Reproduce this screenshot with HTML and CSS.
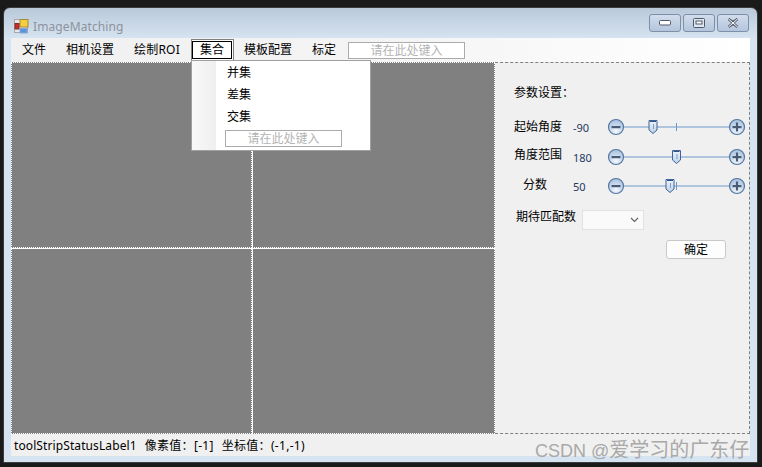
FILE: index.html
```html
<!DOCTYPE html>
<html lang="zh-CN">
<head>
    <meta charset="UTF-8">
    <title>ImageMatching</title>
    <link rel="stylesheet" href="styles.css">
</head>
<body>
    <svg class="defs" width="0" height="0">
        <defs>
            <radialGradient id="ball" cx="50%" cy="75%" r="70%">
                <stop offset="0" stop-color="#f4f8fd"/>
                <stop offset="0.55" stop-color="#c9daee"/>
                <stop offset="1" stop-color="#a9c2de"/>
            </radialGradient>
            <linearGradient id="thumb" x1="0" y1="0" x2="0" y2="1">
                <stop offset="0" stop-color="#eef4fb"/>
                <stop offset="1" stop-color="#bcd0e8"/>
            </linearGradient>
            <g id="minus">
                <circle cx="9" cy="9" r="7.5" fill="url(#ball)" stroke="#54769f" stroke-width="1.2"/>
                <rect x="4.5" y="8" width="9" height="2.2" fill="#4a5c74"/>
            </g>
            <g id="plus">
                <circle cx="9" cy="9" r="7.5" fill="url(#ball)" stroke="#54769f" stroke-width="1.2"/>
                <rect x="4.5" y="8" width="9" height="2.2" fill="#4a5c74"/>
                <rect x="7.9" y="4.5" width="2.2" height="9" fill="#4a5c74"/>
            </g>
            <g id="grip">
                <path d="M-4 -6.5H4V3L0 6.5L-4 3Z" fill="url(#thumb)" stroke="#3f6496" stroke-width="1"/>
                <path d="M-3 -5.5H3" stroke="#2f5488" stroke-width="1"/>
                <path d="M0.5 -3V2" stroke="#7f9cc0" stroke-width="1"/>
            </g>
        </defs>
    </svg>

    <div class="window">
        <div class="titlebar">
            <svg class="app-icon" width="15" height="15" viewBox="0 0 15 15">
                <rect x="0.5" y="0.5" width="13" height="13" fill="#e4e8ee" stroke="#a8a8a8"/>
                <rect x="6" y="0.5" width="8" height="7.5" fill="#f5cf3e" stroke="#a8893a"/>
                <rect x="1" y="4.5" width="4" height="5.5" fill="#cf2a1e" stroke="#7d3028"/>
                <rect x="6" y="9.5" width="7" height="4.5" fill="#5b93de" stroke="#8aa8cf"/>
            </svg>
            <span class="app-title">ImageMatching</span>
            <div class="win-buttons">
                <div class="win-btn">
                    <svg width="12" height="6" viewBox="0 0 12 6"><rect x="0.5" y="0.5" width="11" height="4.5" rx="1" fill="#fff" stroke="#4f5868"/></svg>
                </div>
                <div class="win-btn">
                    <svg width="12" height="10" viewBox="0 0 12 10"><rect x="0.5" y="0.5" width="11" height="9" rx="1" fill="#dfe7f0" stroke="#4f5868"/><rect x="3" y="3" width="6" height="3" fill="#fff" stroke="#4f5868" stroke-width="1"/></svg>
                </div>
                <div class="win-btn">
                    <svg width="12" height="10" viewBox="0 0 12 10"><path d="M1.5 1L6 4L10.5 1M1.5 9L6 6L10.5 9M1.5 1L10.5 9M10.5 1L1.5 9" fill="none" stroke="#5a6270" stroke-width="2.4"/><path d="M1.5 1L10.5 9M10.5 1L1.5 9" fill="none" stroke="#fff" stroke-width="1"/></svg>
                </div>
            </div>
        </div>

        <div class="client">
            <div class="menubar">
                <span class="menu-item">文件</span>
                <span class="menu-item">相机设置</span>
                <span class="menu-item menu-roi">绘制ROI</span>
                <div class="menu-open">
                    <span class="menu-open-label">集合</span>
                    <div class="dropdown">
                        <div class="drop-item">并集</div>
                        <div class="drop-item">差集</div>
                        <div class="drop-item">交集</div>
                        <div class="type-box drop-box">请在此处键入</div>
                    </div>
                </div>
                <span class="menu-item">模板配置</span>
                <span class="menu-item">标定</span>
                <div class="type-box menu-box">请在此处键入</div>
            </div>

            <div class="main">
                <div class="image-grid">
                    <div class="cell"></div>
                    <div class="cell cell-right"></div>
                    <div class="cell cell-lower"></div>
                    <div class="cell cell-right cell-lower"></div>
                </div>
                <div class="params">
                    <div class="params-title">参数设置：</div>
                    <div class="param-row">
                        <span class="param-label">起始角度</span>
                        <span class="param-value">-90</span>
                        <svg class="slider" width="139" height="18" viewBox="0 0 139 18">
                            <path d="M16 9H124" stroke="#6f97c9" stroke-width="1.2"/>
                            <path d="M69.5 5V13" stroke="#6f97c9"/>
                            <use href="#minus"/><use href="#plus" x="121"/>
                            <use href="#grip" x="46" y="9"/>
                        </svg>
                    </div>
                    <div class="param-row">
                        <span class="param-label label-up">角度范围</span>
                        <span class="param-value">180</span>
                        <svg class="slider" width="139" height="18" viewBox="0 0 139 18">
                            <path d="M16 9H124" stroke="#6f97c9" stroke-width="1.2"/>
                            <use href="#minus"/><use href="#plus" x="121"/>
                            <use href="#grip" x="69.5" y="9"/>
                        </svg>
                    </div>
                    <div class="param-row row-three">
                        <span class="param-label label-short">分数</span>
                        <span class="param-value">50</span>
                        <svg class="slider" width="139" height="18" viewBox="0 0 139 18">
                            <path d="M16 9H124" stroke="#6f97c9" stroke-width="1.2"/>
                            <path d="M69.5 5V13" stroke="#6f97c9"/>
                            <use href="#minus"/><use href="#plus" x="121"/>
                            <use href="#grip" x="63" y="9"/>
                        </svg>
                    </div>
                    <div class="match-row">
                        <span class="match-label">期待匹配数</span>
                        <div class="combo">
                            <svg width="9" height="6" viewBox="0 0 9 6"><path d="M1 1L4.5 4.5L8 1" fill="none" stroke="#606060" stroke-width="1.1"/></svg>
                        </div>
                    </div>
                    <div class="button-row">
                        <div class="ok-button">确定</div>
                    </div>
                </div>
            </div>

            <div class="statusbar">
                <span class="status-name">toolStripStatusLabel1</span>
                <span>像素值：[-1]</span>
                <span>坐标值：(-1,-1)</span>
            </div>
        </div>
    </div>

    <div class="watermark">CSDN @<span class="watermark-cn">爱学习的广东仔</span></div>
</body>
</html>
```

FILE: styles.css
```css
* {
    box-sizing: border-box;
}

html, body {
    height: 100%;
}

body {
    margin: 0;
    padding: 7px 4px 4px 3px;
    background-color: #1a1a1a;
    font-family: "Noto Sans", "Noto Sans CJK SC", sans-serif;
    font-size: 12px;
    color: #000;
    overflow: hidden;
}

.defs {
    position: absolute;
}

.window {
    height: 456px;
    padding: 0 7px 7px 7px;
    border: 1px solid #3c3c3c;
    border-radius: 7px 7px 0 0;
    background: linear-gradient(#b9c9d9, #d6e3f1 30px);
    display: flex;
    flex-direction: column;
}

.titlebar {
    height: 30px;
    flex: none;
    display: flex;
    align-items: center;
    padding: 7px 1px 0 3px;
}

.app-icon {
    margin-right: 4px;
}

.app-title {
    color: #8c939b;
    font-size: 12px;
    letter-spacing: 0.1px;
    line-height: 16px;
}

.win-buttons {
    margin-left: auto;
    margin-top: -7px;
    display: flex;
    gap: 2px;
}

.win-btn {
    width: 32px;
    height: 18px;
    border: 1px solid #7e8fa9;
    border-radius: 3px;
    background: linear-gradient(#d2dded, #b4c5dc);
    display: flex;
    align-items: center;
    justify-content: center;
}

.client {
    flex: 1;
    display: flex;
    flex-direction: column;
    min-height: 0;
}

.menubar {
    height: 24px;
    flex: none;
    display: flex;
    align-items: center;
    padding: 0 0 0 11px;
    background: linear-gradient(to right, #f0f0f0, #f4f4f4 50%, #ffffff);
}

.menu-item {
    line-height: 16px;
    margin-right: 20px;
}

.menu-roi {
    letter-spacing: 0.2px;
    margin-right: 19px;
}

.menu-open {
    position: relative;
    width: 43px;
    height: 22px;
    margin: 1px 10px 0 -8px;
    align-self: flex-start;
    border: 1px solid #808080;
    border-bottom: none;
    background: #fff;
    padding: 1px 1px 0 0;
}

.menu-open-label {
    display: block;
    height: 18px;
    border: 1px solid #000;
    text-align: center;
    line-height: 16px;
}

.dropdown {
    position: absolute;
    left: -1px;
    top: 20px;
    width: 180px;
    height: 91px;
    padding-top: 1px;
    background: #fff linear-gradient(to right, #f8f8f8, #efefef 24px, #fff 24px);
    border: 1px solid #a0a0a0;
    z-index: 5;
}

.drop-item {
    height: 22px;
    line-height: 22px;
    padding-left: 35px;
}

.type-box {
    height: 17px;
    border: 1px solid #ababab;
    background: #fff;
    color: #b4b4b4;
    text-align: center;
    line-height: 15px;
    width: 117px;
}

.menu-box {
    margin-left: -8px;
}

.drop-box {
    margin: 2px 0 0 33px;
}

.main {
    height: 372px;
    flex: none;
    display: flex;
}

.image-grid {
    width: 484px;
    flex: none;
    display: grid;
    grid-template-columns: 241px 243px;
    grid-template-rows: 186px 186px;
}

.cell {
    background-color: #808080;
    border: 1px dotted #fff;
}

.cell-right {
    border-left-style: solid;
}

.cell-lower {
    border-top-style: solid;
}

.params {
    flex: 1;
    background-color: #f0f0f0;
    border: 1px dashed #808080;
    border-left: none;
    padding: 22px 0 0 19px;
}

.params-title {
    height: 16px;
    line-height: 16px;
    margin-bottom: 11px;
}

.param-row {
    display: flex;
    align-items: center;
    height: 30px;
}

.row-three {
    height: 28px;
}

.param-label {
    width: 48px;
    margin-right: 11px;
    flex: none;
    line-height: 16px;
}

.label-up {
    padding-bottom: 5px;
}

.label-short {
    padding: 0 0 3px 9px;
}

.param-value {
    width: 34px;
    flex: none;
    font-size: 11px;
    color: #1f3a5f;
}

.slider {
    flex: none;
}

.match-row {
    display: flex;
    align-items: center;
    margin: 9px 0 0 2px;
}

.match-label {
    width: 66px;
    flex: none;
    line-height: 16px;
    padding-bottom: 5px;
}

.combo {
    width: 62px;
    height: 20px;
    background: #fafafa;
    border: 1px solid #e2e2e2;
    display: flex;
    align-items: center;
    justify-content: flex-end;
    padding-right: 4px;
}

.button-row {
    display: flex;
    margin: 10px 0 0 152px;
}

.ok-button {
    width: 60px;
    height: 19px;
    background: #fdfdfd;
    border: 1px solid #c8c8c8;
    border-radius: 3px;
    text-align: center;
    line-height: 17px;
}

.statusbar {
    height: 22px;
    flex: none;
    background-color: #f0f0f0;
    display: flex;
    align-items: center;
    gap: 8px;
    padding: 2px 0 0 3px;
    line-height: 16px;
    letter-spacing: 0.3px;
}

.status-name {
    letter-spacing: 0.1px;
}

.watermark {
    position: absolute;
    left: 535px;
    top: 437px;
    font-family: "Liberation Sans", "Noto Sans CJK SC", sans-serif;
    font-size: 18px;
    line-height: 24px;
    color: #a9a9a9;
    white-space: nowrap;
}

.watermark-cn {
    font-family: "Noto Sans CJK SC", sans-serif;
    font-size: 20px;
}
```
